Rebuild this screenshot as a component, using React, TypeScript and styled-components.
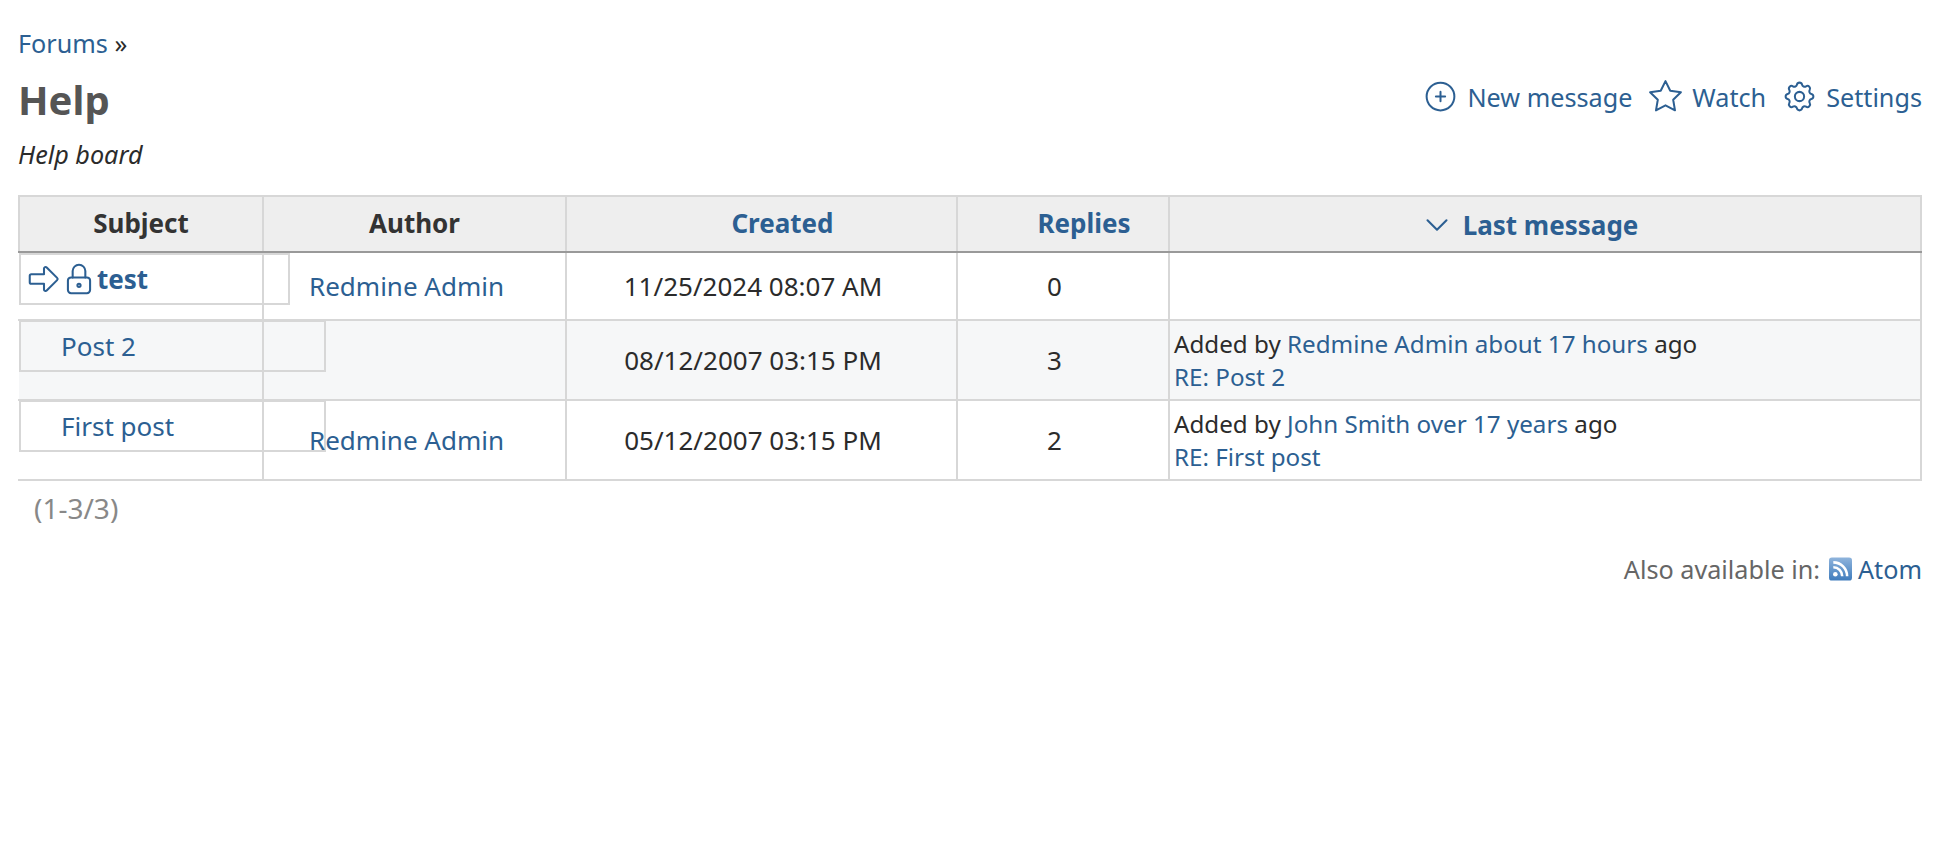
import React from 'react'
import styled, { createGlobalStyle } from 'styled-components'
import { TbArrowBigRight, TbChevronDown, TbCirclePlus, TbLock, TbSettings, TbStar } from 'react-icons/tb'

const GlobalStyle = createGlobalStyle`
  html, body {
    margin: 0;
    background: #fff;
  }
  body {
    font-family: "Noto Sans", "Open Sans", sans-serif;
    font-size: 25.2px;
    line-height: 32px;
    color: #2b2b2b;
  }
`

const topics = [
  { subject: 'test', sticky: true, boxWidth: 271, author: 'Redmine Admin', created: '11/25/2024 08:07 AM', replies: 0 },
  {
    subject: 'Post 2', boxWidth: 307, created: '08/12/2007 03:15 PM', replies: 3,
    last: { by: 'Redmine Admin', when: 'about 17 hours', title: 'RE: Post 2' },
  },
  {
    subject: 'First post', boxWidth: 307, author: 'Redmine Admin', created: '05/12/2007 03:15 PM', replies: 2,
    last: { by: 'John Smith', when: 'over 17 years', title: 'RE: First post' },
  },
]

const FeedIcon = () => (
  <svg width="23" height="24" viewBox="0 0 16 16">
    <defs>
      <linearGradient id="feed" x1="0" y1="0" x2="0" y2="1">
        <stop offset="0" stopColor="#8fb4dc" />
        <stop offset="1" stopColor="#3f7cbd" />
      </linearGradient>
    </defs>
    <rect width="16" height="16" rx="2" fill="url(#feed)" />
    <circle cx="4.4" cy="11.6" r="1.6" fill="#fff" />
    <path d="M3 6.8a6.2 6.2 0 0 1 6.2 6.2M3 3.4A9.6 9.6 0 0 1 12.6 13" fill="none" stroke="#fff" strokeWidth="1.8" />
  </svg>
)

export default function App() {
  return (
    <Page>
      <GlobalStyle />
      <Breadcrumb><Link href="#">Forums</Link> »</Breadcrumb>
      <TitleRow>
        <Title>Help</Title>
        <Actions>
          <Action href="#"><TbCirclePlus size={37} strokeWidth={1.3} />New message</Action>
          <Action href="#"><TbStar size={37} strokeWidth={1.3} />Watch</Action>
          <Action href="#"><TbSettings size={37} strokeWidth={1.3} />Settings</Action>
        </Actions>
      </TitleRow>
      <Description>Help board</Description>
      <Table>
        <colgroup>
          <col width="244" />
          <col width="303" />
          <col width="391" />
          <col width="212" />
          <col />
        </colgroup>
        <thead>
          <tr>
            <Th>Subject</Th>
            <Th>Author</Th>
            <SortedTh><HeadLink href="#">Created</HeadLink></SortedTh>
            <SortedTh><HeadLink href="#">Replies</HeadLink></SortedTh>
            <LastTh>
              <HeadLink href="#"><SortIcon size={38} strokeWidth={1.3} />Last message</HeadLink>
            </LastTh>
          </tr>
        </thead>
        <tbody>
          {topics.map((t, i) => (
            <Row key={t.subject} $odd={i % 2 === 1}>
              <SubjectCell>
                <SubjectBox $width={t.boxWidth} $sticky={t.sticky}>
                  {t.sticky && (
                    <>
                      <TbArrowBigRight size={38} strokeWidth={1.3} color="#2c5f92" />
                      <LockIcon size={38} strokeWidth={1.3} color="#2c5f92" />
                    </>
                  )}
                  <SubjectLink href="#" $sticky={t.sticky}>{t.subject}</SubjectLink>
                </SubjectBox>
              </SubjectCell>
              <AuthorCell>{t.author && <Link href="#">{t.author}</Link>}</AuthorCell>
              <CenterCell>{t.created}</CenterCell>
              <CenterCell>{t.replies}</CenterCell>
              <LastCell>
                {t.last && (
                  <>
                    Added by <Link href="#">{t.last.by}</Link> <Link href="#">{t.last.when}</Link> ago
                    <br />
                    <Link href="#">{t.last.title}</Link>
                  </>
                )}
              </LastCell>
            </Row>
          ))}
        </tbody>
      </Table>
      <Pagination>(1-3/3)</Pagination>
      <OtherFormats>
        Also available in:
        <FeedLink href="#"><FeedIcon />Atom</FeedLink>
      </OtherFormats>
    </Page>
  )
}

const Page = styled.div`
  padding: 27px 20px 0 18px;
  min-height: 829px;
`

const Link = styled.a`
  color: #2c5f92;
  text-decoration: none;
`

const Breadcrumb = styled.p`
  margin: 0;
  height: 32px;
`

const TitleRow = styled.div`
  display: flex;
  justify-content: space-between;
  align-items: center;
  margin-top: 13px;
  height: 56px;
`

const Title = styled.h2`
  margin: 0;
  font-size: 40px;
  font-weight: 700;
  color: #555;
`

const Actions = styled.div`
  display: flex;
  gap: 15px;
  margin-top: -7px;
`

const Action = styled(Link)`
  display: flex;
  align-items: center;
  gap: 8px;
`

const Description = styled.p`
  margin: 0;
  padding-top: 10px;
  height: 47px;
  font-style: italic;
`

const Table = styled.table`
  width: 1904px;
  table-layout: fixed;
  border-collapse: collapse;
  margin-top: 10px;
  font-size: 26px;
`

const Th = styled.th`
  height: 52px;
  padding: 0 0 2px;
  text-align: center;
  font-weight: 700;
  color: #333;
  background: #eee;
  border: 2px solid #d7d7d7;
  border-bottom: 2px solid #999;
`

const SortedTh = styled(Th)`
  padding-left: 42px;
`

const LastTh = styled(Th)`
  height: 44px;
  padding: 10px 34px 0 0;
`

const HeadLink = styled(Link)`
  display: inline-flex;
  align-items: center;
  height: 32px;
`

const SortIcon = styled(TbChevronDown)`
  margin: -3px 7px -3px 0;
`

const Row = styled.tr<{ $odd: boolean }>`
  background: ${(p) => (p.$odd ? '#f6f7f8' : '#fff')};
  height: 80px;
  &:first-child {
    height: 68px;
  }
`

const Cell = styled.td`
  padding: 0;
  border: 2px solid #d7d7d7;
`

const SubjectCell = styled(Cell)`
  vertical-align: top;
  border-left-color: transparent;
`

const SubjectBox = styled.div<{ $width: number; $sticky?: boolean }>`
  box-sizing: border-box;
  display: flex;
  align-items: center;
  width: ${(p) => p.$width}px;
  height: 52px;
  margin: ${(p) => (p.$sticky ? '0' : '-1px')} 0 0 -1px;
  padding-left: ${(p) => (p.$sticky ? '4px' : '40px')};
  border: 2px solid #d7d7d7;
`

const LockIcon = styled(TbLock)`
  margin-left: -3px;
`

const SubjectLink = styled(Link)<{ $sticky?: boolean }>`
  font-weight: ${(p) => (p.$sticky ? 700 : 400)};
  margin-left: ${(p) => (p.$sticky ? '-1px' : '0')};
`

const AuthorCell = styled(Cell)`
  padding-left: 45px;
`

const CenterCell = styled(Cell)`
  text-align: center;
  padding-right: 17px;
`

const LastCell = styled(Cell)`
  padding-left: 4px;
  font-size: 24.2px;
  line-height: 33px;
`

const Pagination = styled.p`
  margin: 11px 0 0 16px;
  font-size: 28px;
  color: #888;
`

const OtherFormats = styled.p`
  display: flex;
  justify-content: flex-end;
  align-items: center;
  margin: 29px 0 0;
  color: #666;
`

const FeedLink = styled(Link)`
  display: flex;
  align-items: center;
  gap: 6px;
  margin-left: 9px;
`
